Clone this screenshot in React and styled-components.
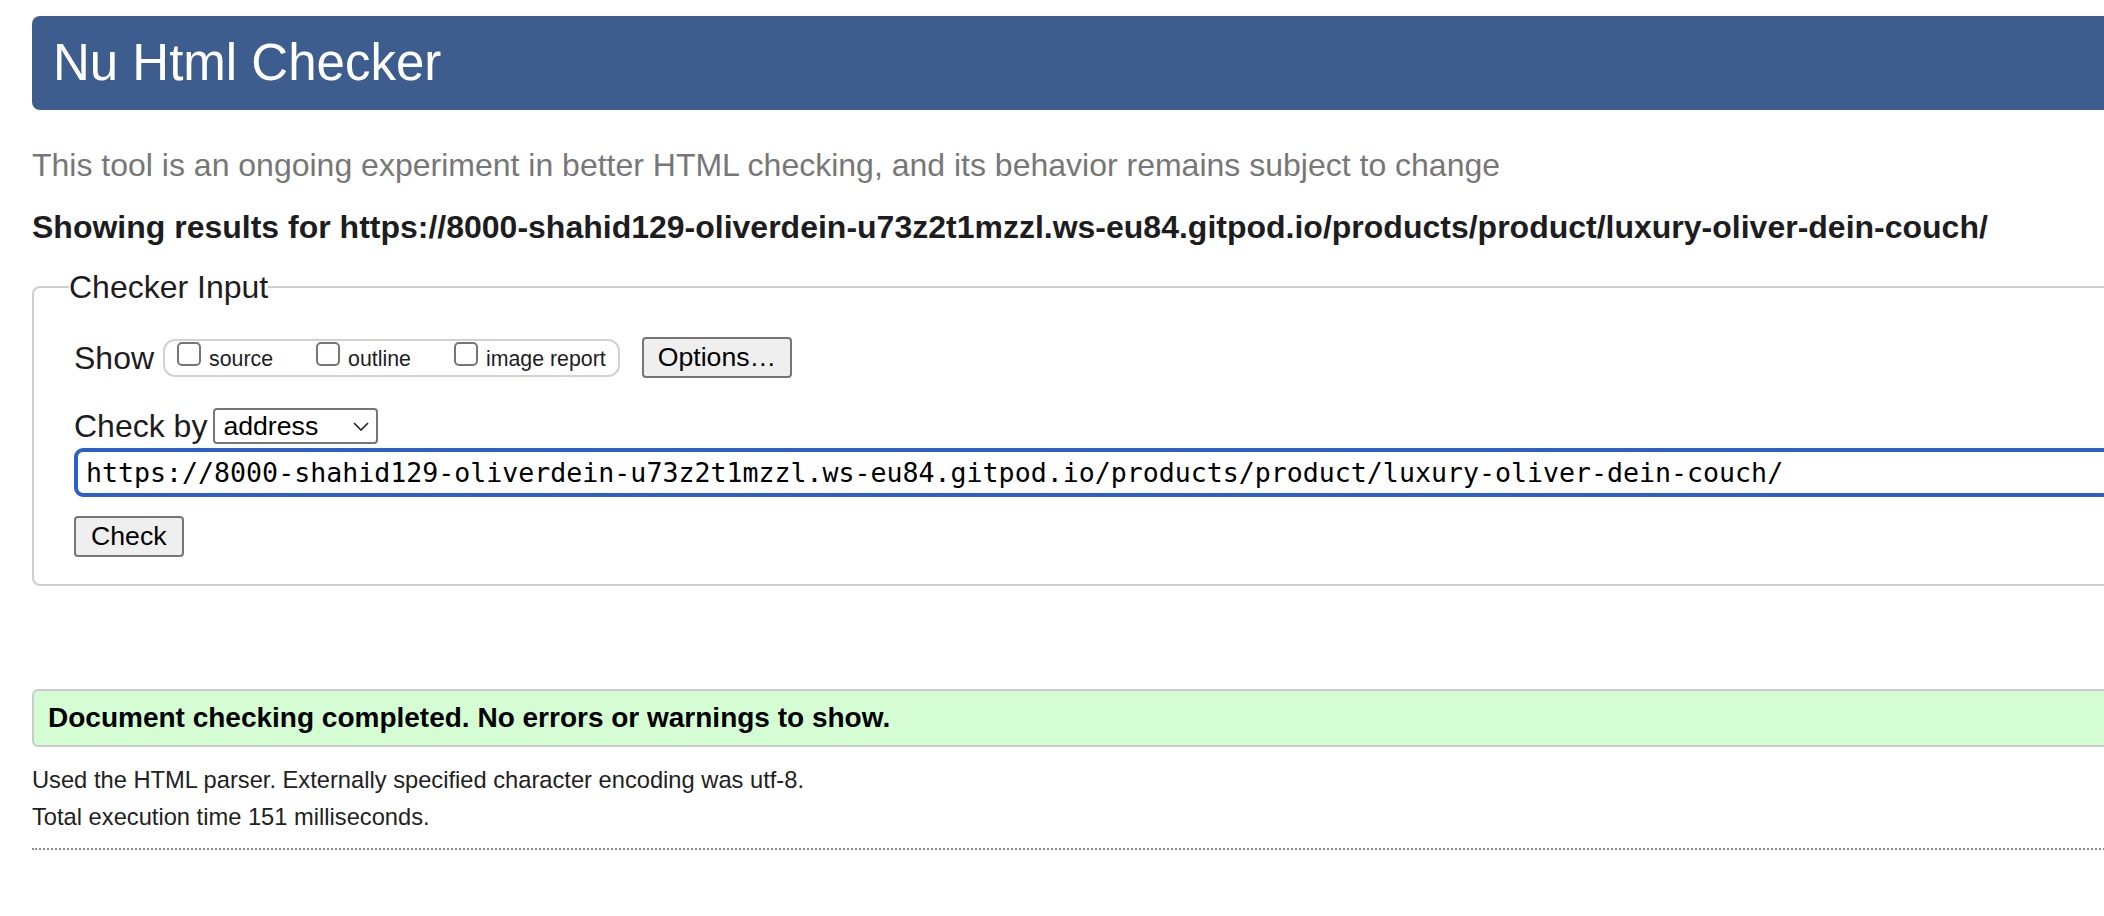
import React from "react";
import styled, { createGlobalStyle } from "styled-components";

const GlobalStyle = createGlobalStyle`
  html, body {
    margin: 0;
    padding: 0;
    background: #fff;
    overflow: hidden;
  }
  body {
    font-family: "Liberation Sans", Arial, Helvetica, sans-serif;
    color: #1d1d1f;
  }
`;

const Page = styled.div`
  width: 2240px;
  padding: 16px 0 40px 32px;
`;

const Header = styled.h1`
  margin: 0;
  height: 94px;
  padding-left: 21px;
  background: #3e5d8f;
  border-radius: 8px;
  color: #fff;
  font-size: 51px;
  font-weight: normal;
  line-height: 94px;
`;

const Lead = styled.p`
  margin: 35px 0 0;
  font-size: 32px;
  line-height: 40px;
  color: #777;
`;

const Results = styled.p`
  margin: 22px 0 0;
  font-size: 32px;
  font-weight: bold;
  line-height: 40px;
  color: #1d1d1f;
`;

const Fieldset = styled.fieldset`
  margin: 22px 0 0;
  padding: 32px 0 27px 40px;
  border: 2px solid #cfcfcf;
  border-radius: 8px;
  min-width: 0;
`;

const Legend = styled.legend`
  margin-left: -5px;
  padding: 0;
  font-size: 32px;
  line-height: 36px;
`;

const Row = styled.div`
  display: flex;
  align-items: center;
  gap: ${(p) => p.gap || 0}px;
  height: ${(p) => p.h}px;
  margin-top: ${(p) => p.mt || 0}px;
`;

const Label = styled.span`
  font-size: 32px;
  line-height: 40px;
`;

const Group = styled.div`
  display: flex;
  align-items: flex-start;
  gap: 43px;
  box-sizing: border-box;
  height: 38px;
  padding: 1px 12px 0 12px;
  margin-left: 9px;
  border: 2px solid #d2d2d2;
  border-radius: 12px;
`;

const Option = styled.label`
  display: flex;
  align-items: baseline;
  gap: 8px;
  font-size: 21.33px;
  line-height: 24px;
`;

const Box = styled.input`
  appearance: none;
  display: inline-block;
  box-sizing: border-box;
  width: 24px;
  height: 24px;
  margin: 0;
  border: 2px solid #767676;
  border-radius: 5px;
  background: #fff;
`;

const Button = styled.button`
  box-sizing: border-box;
  height: 41px;
  padding: 0 ${(p) => p.px || 14}px;
  margin-left: ${(p) => p.ml || 0}px;
  background: #efefef;
  border: 2px solid #767676;
  border-radius: 4px;
  font-family: "Liberation Sans", Arial, sans-serif;
  font-size: 26.67px;
  color: #000;
`;

const Select = styled.div`
  display: flex;
  align-items: center;
  justify-content: space-between;
  box-sizing: border-box;
  width: 165px;
  height: 36px;
  padding: 0 7px 0 8px;
  border: 2px solid #767676;
  border-radius: 4px;
  font-size: 26.67px;
  color: #000;

  svg {
    display: block;
  }
`;

const UrlInput = styled.input`
  display: block;
  box-sizing: border-box;
  width: 100%;
  height: 49px;
  margin-top: 4px;
  padding: 0 8px;
  border: 4px solid #2b5fc9;
  border-radius: 9px;
  outline: none;
  font-family: "DejaVu Sans Mono", "Liberation Mono", monospace;
  font-size: 26.6px;
  color: #000;
  background: #fff;
`;

const CheckWrap = styled.div`
  margin-top: 19px;
`;

const Success = styled.p`
  margin: 103px 0 0;
  box-sizing: border-box;
  height: 58px;
  padding-left: 14px;
  background: #d5fdd3;
  border: 2px solid #cbcbcb;
  border-radius: 6px;
  font-size: 28px;
  font-weight: bold;
  line-height: 54px;
  color: #000;
`;

const Info = styled.p`
  margin: ${(p) => p.mt}px 0 0;
  font-size: 23.7px;
  line-height: 32px;
  color: #222;
`;

const Rule = styled.hr`
  margin: 15px 0 0;
  height: 0;
  border: 0;
  border-top: 2px dotted #8c8c8c;
`;

const url =
  "https://8000-shahid129-oliverdein-u73z2t1mzzl.ws-eu84.gitpod.io/products/product/luxury-oliver-dein-couch/";

const options = ["source", "outline", "image report"];

export default function App() {
  return (
    <>
      <GlobalStyle />
      <Page>
        <Header>Nu Html Checker</Header>
        <Lead>
          This tool is an ongoing experiment in better HTML checking, and its
          behavior remains subject to change
        </Lead>
        <Results>Showing results for {url}</Results>

        <Fieldset>
          <Legend>Checker Input</Legend>
          <Row h={41}>
            <Label>Show</Label>
            <Group>
              {options.map((o) => (
                <Option key={o}>
                  <Box type="checkbox" readOnly />
                  {o}
                </Option>
              ))}
            </Group>
            <Button ml={22}>Options…</Button>
          </Row>
          <Row h={36} mt={30} gap={6}>
            <Label>Check by</Label>
            <Select>
              <span>address</span>
              <svg width="16" height="9" viewBox="0 0 16 9">
                <polyline
                  points="1,1 8,8 15,1"
                  fill="none"
                  stroke="#222"
                  strokeWidth="1.6"
                />
              </svg>
            </Select>
          </Row>
          <UrlInput type="url" value={url} readOnly />
          <CheckWrap>
            <Button px={15}>Check</Button>
          </CheckWrap>
        </Fieldset>

        <Success>Document checking completed. No errors or warnings to show.</Success>
        <Info mt={17}>
          Used the HTML parser. Externally specified character encoding was utf-8.
        </Info>
        <Info mt={5}>Total execution time 151 milliseconds.</Info>
        <Rule />
      </Page>
    </>
  );
}
